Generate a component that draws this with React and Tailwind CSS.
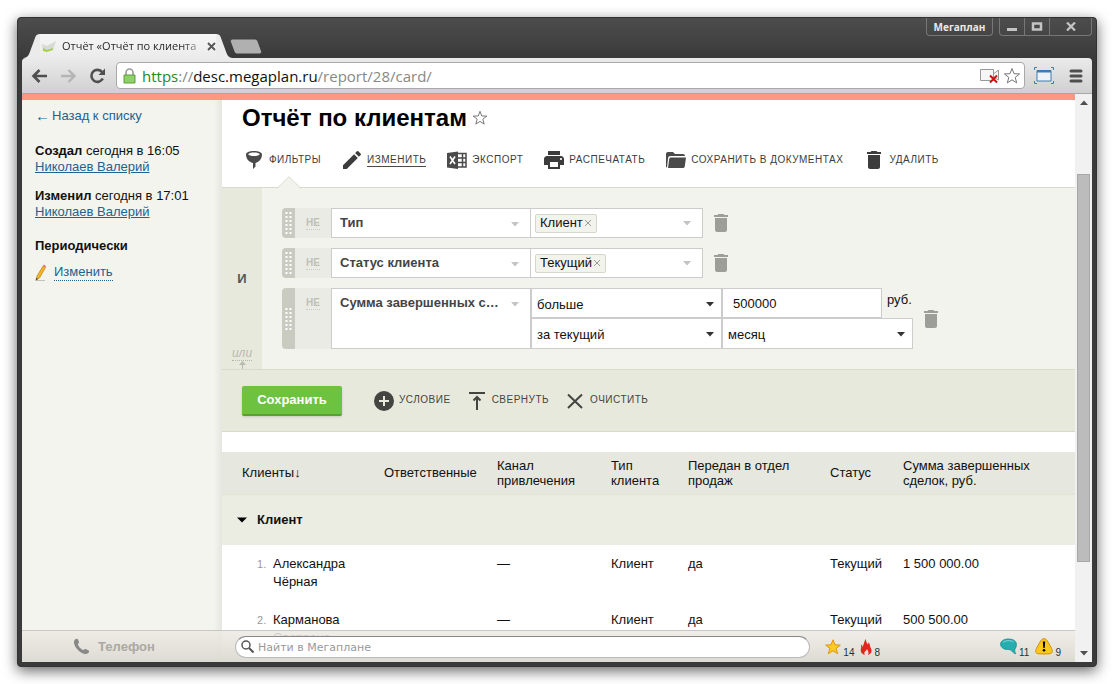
import React, { useState } from 'react';
import { MdEdit, MdPrint, MdDelete } from 'react-icons/md';

const sidebarEvents = [
  { action: 'Создал', when: 'сегодня в 16:05', who: 'Николаев Валерий' },
  { action: 'Изменил', when: 'сегодня в 17:01', who: 'Николаев Валерий' },
];

const columns = [
  { title: 'Клиенты↓', width: 'w-[162px]' },
  { title: 'Ответственные', width: 'w-[113px]' },
  { title: 'Канал привлечения', width: 'w-[114px]' },
  { title: 'Тип клиента', width: 'w-[77px]' },
  { title: 'Передан в отдел продаж', width: 'w-[142px]' },
  { title: 'Статус', width: 'w-[73px]' },
  { title: 'Сумма завершенных сделок, руб.', width: '' },
];

const clients = [
  { name: 'Александра Чёрная', channel: '—', type: 'Клиент', passed: 'да', status: 'Текущий', sum: '1 500 000.00' },
  { name: 'Карманова Светлана', channel: '—', type: 'Клиент', passed: 'да', status: 'Текущий', sum: '500 500.00' },
];

/* ---------- Icons ---------- */

const FilterIcon = () => (
  <svg width="24" height="24" viewBox="0 0 24 24" fill="#4a4a4a">
    <path fillRule="evenodd" d="M4 6.5C4 4.4 7.4 3 12 3s8 1.400 8 3.500c0 4-2.800 7.500-6.500 8.500v3.500L11 21v-6C6.800 14 4 10.500 4 6.500zm2.200-.3C6.800 7.300 9 8 12 8s5.200-.7 5.800-1.800C17.200 5.100 15 4.500 12 4.500s-5.200.6-5.800 1.700z" />
  </svg>
);

const ExcelIcon = () => (
  <svg width="24" height="24" viewBox="0 0 24 24">
    <path fill="#4a4a4a" d="M2 5l11-1.500V21L2 19.500z" />
    <path fill="none" stroke="#4a4a4a" strokeWidth="1.500" d="M13 5.500h8v13.500h-8M13 10h8M13 14.500h8M17.500 5.500v13.500" />
    <path fill="none" stroke="#fff" strokeWidth="1.600" d="M5 8.500l5 7.500M10 8.500L5 16" />
  </svg>
);

const FolderIcon = () => (
  <svg width="24" height="24" viewBox="0 0 24 24" fill="#4a4a4a">
    <path d="M2 19V6c0-1.100.9-2 2-2h5l2 2h8c1.100 0 2 .9 2 2H6.500C5 8 4.300 8.800 4.100 10L3 19.500z" />
    <path d="M7 9.500h15l-1.200 8.700c-.1 1-.9 1.800-2 1.800H4l1.200-9c.1-.9.800-1.500 1.800-1.500z" />
  </svg>
);

const PlusIcon = () => (
  <svg width="24" height="24" viewBox="0 0 24 24">
    <circle cx="12" cy="12" r="10" fill="#444541" />
    <path d="M12 7v10M7 12h10" stroke="#e8e9dd" strokeWidth="2" />
  </svg>
);

const CollapseIcon = () => (
  <svg width="24" height="24" viewBox="0 0 24 24" fill="none" stroke="#444541" strokeWidth="2">
    <path d="M4 4h16M12 8v13M8.500 11.500L12 8l3.500 3.500" />
  </svg>
);

const ClearIcon = () => (
  <svg width="24" height="24" viewBox="0 0 24 24" fill="none" stroke="#444541" strokeWidth="2">
    <path d="M5 5.500l14 13.500M19 5.500L5 19" />
  </svg>
);

const StarOutline = ({ size, stroke }) => (
  <svg width={size} height={size} viewBox="0 0 18 18" fill="#fff" stroke={stroke}>
    <path d="M9 1.500l2 5.200 5.600.2-4.400 3.500 1.500 5.500L9 12.800l-4.700 3.100 1.500-5.500L1.400 6.900 7 6.700z" />
  </svg>
);

const Caret = ({ className }) => (
  <svg className={className} width="8" height="5" viewBox="0 0 8 5" fill="currentColor">
    <path d="M0 0h8L4 4.500z" />
  </svg>
);

/* ---------- Browser frame ---------- */

const TitleBar = () => (
  <div className="flex h-10 items-end justify-between">
    <div className="flex items-end">
      <svg width="18" height="24" viewBox="0 0 18 24" className="shrink-0">
        <path d="M0 24c4 0 6-1 7.500-5L13 4c1-3 2-4 5-4v24z" fill="#ebebeb" />
      </svg>
      <div className="flex h-6 w-[176px] items-center bg-linear-to-b from-[#f6f6f6] to-[#ebebeb]">
        <svg width="18" height="14" viewBox="0 0 18 14" className="shrink-0">
          <path d="M2 5l5 2 9-5-3 9-10 1z" fill="#d8dad4" />
          <path d="M3 9l4 2 6-2v2l-6 2-4-1z" fill="#a5cf4c" />
        </svg>
        <span className="ml-1 w-[142px] bg-linear-to-r from-[#222] from-85% to-[#bbb] bg-clip-text font-['Open_Sans',sans-serif] text-[11px] leading-5 whitespace-nowrap text-transparent">
          Отчёт «Отчёт по клиента
        </span>
        <button type="button" aria-label="Закрыть вкладку" className="ml-[6px]">
          <svg width="9" height="9" viewBox="0 0 9 9" stroke="#555" strokeWidth="1.800">
            <path d="M1 1l7 7M8 1L1 8" />
          </svg>
        </button>
      </div>
      <svg width="18" height="24" viewBox="0 0 18 24" className="shrink-0">
        <path d="M0 0c3 0 4 1 5 4l5.500 15c1.500 4 3.500 5 7.500 5H0z" fill="#ebebeb" />
      </svg>
      <button type="button" aria-label="Новая вкладка" className="mb-1 -ml-1">
        <svg width="32" height="15" viewBox="0 0 32 15">
          <path d="M3 .5h21c2 0 3 .5 3.500 2L31 12c.5 1.500 0 2.500-2 2.500H8c-2 0-3-.5-3.500-2L1 3C.5 1.500 1 .5 3 .5z" fill="#b0b0b0" />
        </svg>
      </button>
    </div>

    <div className="flex gap-[6px] self-start text-[#e8e8e8]">
      <button type="button" className="h-[18px] w-[67px] rounded-b-sm border border-t-0 border-[#777] font-['Open_Sans',sans-serif] text-[10px] leading-4 font-bold">
        Мегаплан
      </button>
      <div className="flex h-[18px] divide-x divide-[#777] rounded-b-sm border border-t-0 border-[#777]">
        <button type="button" aria-label="Свернуть" className="flex w-[25px] items-center justify-center">
          <svg width="12" height="12" viewBox="0 0 12 12"><path d="M1 7h10v3H1z" fill="#c4c4c4" /></svg>
        </button>
        <button type="button" aria-label="Развернуть" className="flex w-[25px] items-center justify-center">
          <svg width="12" height="12" viewBox="0 0 12 12" fill="none" stroke="#c4c4c4" strokeWidth="2.500">
            <path d="M2 2.500h8v6H2z" />
          </svg>
        </button>
        <button type="button" aria-label="Закрыть" className="flex w-[41px] items-center justify-center">
          <svg width="10" height="9" viewBox="0 0 10 9" stroke="#c4c4c4" strokeWidth="2.200">
            <path d="M1 .5l8 8M9 .5l-8 8" />
          </svg>
        </button>
      </div>
    </div>
  </div>
);

const AddressBar = () => (
  <div className="flex h-9 shrink-0 items-center rounded-t-sm border-b border-[#a8a8a8] bg-linear-to-b from-[#ebebeb] to-[#d0d0d0] px-[9px]">
    <button type="button" aria-label="Назад" className="w-[29px]">
      <svg width="17" height="14" viewBox="0 0 17 14" fill="none" stroke="#4f4f4f" strokeWidth="2.600">
        <path d="M16 7H3M8.500 1L2.500 7l6 6" />
      </svg>
    </button>
    <button type="button" aria-label="Вперёд" className="w-[29px]">
      <svg width="17" height="14" viewBox="0 0 17 14" fill="none" stroke="#b4b4b4" strokeWidth="2.400">
        <path d="M1 7h13M8.500 1l6 6-6 6" />
      </svg>
    </button>
    <button type="button" aria-label="Обновить" className="w-[27px]">
      <svg width="17" height="16" viewBox="0 0 17 16" fill="none" stroke="#4f4f4f" strokeWidth="2.600">
        <path d="M13.200 4.200A6 6 0 1 0 13.800 10.500" />
        <path d="M16 .5v6.500H9.500z" fill="#4f4f4f" stroke="none" />
      </svg>
    </button>
    <div className="flex h-[27px] min-w-0 grow items-center rounded-sm border border-[#a9a9a9] bg-white pr-[3px] pl-[6px]">
      <svg width="13" height="16" viewBox="0 0 13 16" className="shrink-0">
        <path d="M3 7V4.500a3.500 3.500 0 0 1 7 0V7" fill="none" stroke="#9a9a9a" strokeWidth="1.600" />
        <path d="M1 7h11v8H1z" fill="#8fd166" stroke="#5f9e3c" />
      </svg>
      <div className="ml-[6px] grow truncate font-['Open_Sans',sans-serif] text-[15px] leading-6 text-[#888]">
        <span className="text-[#1a8a1a]">https</span>://<span className="text-[#111]">desc.megaplan.ru</span>/report/28/card/
      </div>
      <svg width="20" height="17" viewBox="0 0 20 17" className="shrink-0">
        <path d="M.5 2.500h13v11H.5zM13.500 7l5-4v10l-5-3" fill="#f6f6f6" stroke="#999" />
        <path d="M10 8.500l7 7M17 8.500l-7 7" stroke="#d01010" strokeWidth="2" />
      </svg>
      <button type="button" aria-label="Добавить в закладки" className="ml-[3px]">
        <StarOutline size={18} stroke="#777" />
      </button>
    </div>
    <svg width="20" height="17" viewBox="0 0 20 17" className="ml-[9px] shrink-0" fill="none" stroke="#3d7db5">
      <path d="M3 3.500h14v10.500H3z" fill="#eef3f8" />
      <path d="M3 4.500h14" strokeWidth="2" />
      <path d="M.5 3V.5H3M17 .5h2.500V3M19.500 14v2.500H17M3 16.500H.5V14" />
    </svg>
    <button type="button" aria-label="Меню" className="ml-[15px]">
      <svg width="14" height="14" viewBox="0 0 14 14" stroke="#4f4f4f" strokeWidth="3" strokeLinecap="round">
        <path d="M2 2h10M2 7h10M2 12h10" />
      </svg>
    </button>
  </div>
);

const ScrollBar = () => (
  <div className="flex w-[17px] shrink-0 flex-col items-center bg-[#f1f1f1] text-[#505050]">
    <div className="flex h-[17px] items-center"><Caret className="rotate-180" /></div>
    <div className="flex-[63]" />
    <div className="w-[13px] flex-[388] border border-[#a8a8a8] bg-[#bcbcbc]" />
    <div className="flex-[83]" />
    <div className="flex h-[17px] items-center"><Caret /></div>
  </div>
);

/* ---------- Page ---------- */

const Sidebar = () => (
  <aside className="w-[200px] shrink-0 bg-[#f3f3ee] bg-linear-to-r from-[#f4f4ef] from-96% to-[#e6e6e0] pt-2 pl-[13px] leading-4">
    <a href="#reports" className="flex text-[#22628f]">
      <span className="w-[17px] text-[15px]">←</span>
      Назад к списку
    </a>
    <div className="mt-[19px] space-y-[13px]">
      {sidebarEvents.map((event) => (
        <div key={event.action}>
          <div><b>{event.action}</b> {event.when}</div>
          <a href="#user" className="block text-[#22628f] underline">{event.who}</a>
        </div>
      ))}
    </div>
    <h2 className="mt-[18px] font-bold">Периодически</h2>
    <div className="mt-[10px] flex items-center gap-[7px]">
      <svg width="12" height="17" viewBox="0 0 12 17">
        <path d="M1 16l1-4L8 2l2.500 1.500L4.500 14z" fill="#f5b324" stroke="#b9821b" strokeWidth=".7" />
        <path d="M8 2l.8-1.500L11 2l-.6 1.500z" fill="#e8747c" />
        <path d="M1 16l.5-2L3 15z" fill="#222" />
        <path d="M0 16.500h10" stroke="#aaa" strokeWidth=".7" />
      </svg>
      <a href="#schedule" className="border-b border-dotted border-[#22628f] text-[#22628f]">Изменить</a>
    </div>
  </aside>
);

const Action = ({ icon, label, underlined, children }) => (
  <button type="button" className="relative flex items-center gap-[3px]">
    {icon}
    <span className={`text-[10px] leading-3 tracking-wider whitespace-nowrap uppercase ${underlined ? 'border-b border-[#4a4a4a]' : 'border-b border-transparent'}`}>
      {label}
    </span>
    {children}
  </button>
);

const ReportHeader = () => (
  <header className="px-5 pt-[2px] pb-[15px]">
    <div className="flex items-center gap-[5px]">
      <h1 className="text-2xl font-bold text-black">Отчёт по клиентам</h1>
      <button type="button" aria-label="В избранное"><StarOutline size={16} stroke="#666" /></button>
    </div>
    <div className="mt-[14px] flex gap-[19px] text-[#3c3c3c]">
      <Action icon={<FilterIcon />} label="Фильтры">
        {/* notch that links the button with the filter panel */}
        <svg width="24" height="13" viewBox="0 0 24 13" className="absolute top-[28px] left-[35px]">
          <path d="M0 12.500L12 .7l12 11.800" fill="#f2f3ed" stroke="#d8dbcb" />
          <path d="M1 12.500h22" stroke="#f2f3ed" />
        </svg>
      </Action>
      <Action icon={<MdEdit size={24} />} label="Изменить" underlined />
      <Action icon={<ExcelIcon />} label="Экспорт" />
      <Action icon={<MdPrint size={24} />} label="Распечатать" />
      <Action icon={<FolderIcon />} label="Сохранить в документах" />
      <Action icon={<MdDelete size={24} />} label="Удалить" />
    </div>
  </header>
);

const FilterSelect = ({ label, value, className, selectClass, caretClass }) => (
  <div className={`relative border border-[#ccc] bg-white ${className}`}>
    <select aria-label={label} defaultValue={value} className={`h-7 w-full appearance-none truncate ${selectClass}`}>
      <option>{value}</option>
    </select>
    <Caret className={`pointer-events-none absolute top-[13px] ${caretClass}`} />
  </div>
);

const FilterRow = ({ field, children }) => (
  <div className="flex">
    <div className="flex w-[13px] items-center justify-center rounded-l-sm bg-[#c9cac0]">
      <svg width="7" height="22" viewBox="0 0 7 22" stroke="#fff" strokeWidth="2" strokeDasharray="2 2">
        <path d="M1.500 0v22M5.500 0v22" />
      </svg>
    </div>
    <div className="w-9 bg-[#ebebe5] pt-[9px] text-center">
      <button type="button" className="mx-auto block border-b border-dotted border-[#c9cac0] text-[10px] leading-3 font-bold text-[#bfc0b4]">
        НЕ
      </button>
    </div>
    <FilterSelect label="Поле" value={field} className="w-[200px]" selectClass="pr-[30px] pl-2 font-bold text-[#444]" caretClass="right-[11px] text-[#c4c4c4]" />
    {children}
  </div>
);

const TokenField = ({ value }) => (
  <div className="-ml-px flex h-[30px] w-[173px] items-center justify-between border border-[#ccc] bg-white pr-[11px] pl-1">
    <span className="flex h-[19px] items-center gap-px rounded-xs border border-[#d5d8c6] bg-[#f2f3ed] px-1 leading-4">
      {value}
      <button type="button" aria-label="Убрать">
        <svg width="8" height="8" viewBox="0 0 8 8" stroke="#999"><path d="M1 1l6 6M7 1L1 7" /></svg>
      </button>
    </span>
    <button type="button" aria-label="Выбрать значение"><Caret className="text-[#c4c4c4]" /></button>
  </div>
);

const DeleteCondition = () => (
  <button type="button" aria-label="Удалить условие" className="ml-[6px] self-center text-[#9d9e98]">
    <MdDelete size={24} />
  </button>
);

const Filters = () => {
  const [amount, setAmount] = useState('500000');

  return (
    <section className="flex border-y border-[#d8dbcb] bg-[#f2f3ed]">
      <div className="flex w-10 shrink-0 flex-col items-center bg-[#e8e9dd]">
        <div className="flex-1" />
        <span className="font-bold text-[#555]">И</span>
        <div className="flex flex-1 flex-col items-center justify-end">
          <button type="button" className="border-b border-dotted border-[#b5b6aa] text-[12px] leading-[14px] text-[#b9baae] italic">или</button>
          <svg width="7" height="8" viewBox="0 0 7 8" fill="#b9baae"><path d="M3.500 0L7 4H4v4H3V4H0z" /></svg>
        </div>
      </div>

      <div className="space-y-[10px] py-5 pl-5">
        <FilterRow field="Тип">
          <TokenField value="Клиент" />
          <DeleteCondition />
        </FilterRow>
        <FilterRow field="Статус клиента">
          <TokenField value="Текущий" />
          <DeleteCondition />
        </FilterRow>
        <FilterRow field="Сумма завершенных сделок">
          <div>
            <div className="flex">
              <FilterSelect label="Сравнение" value="больше" className="w-[191px]" selectClass="pt-[3px] pl-[5px]" caretClass="right-[7px] text-[#333]" />
              <input
                aria-label="Сумма"
                value={amount}
                onChange={(e) => setAmount(e.target.value)}
                className="h-[30px] w-[160px] border border-[#ccc] bg-white px-[10px]"
              />
              <span className="pt-[2px] pl-[5px]">руб.</span>
            </div>
            <div className="flex h-[31px]">
              <FilterSelect label="Период" value="за текущий" className="w-[191px]" selectClass="pt-[3px] pl-[5px]" caretClass="right-[7px] text-[#333]" />
              <FilterSelect label="Единица периода" value="месяц" className="w-[191px]" selectClass="pt-[3px] pl-[5px]" caretClass="right-[7px] text-[#333]" />
            </div>
          </div>
          <DeleteCondition />
        </FilterRow>
      </div>
    </section>
  );
};

const FilterActions = () => (
  <div className="flex h-[62px] items-center border-b border-[#d8dbc4] bg-[#e8e9dd] px-5 text-[#444541]">
    <button type="button" className="mr-[30px] h-[30px] w-[100px] rounded-xs border-b-2 border-[#5a9f33] bg-[#6dc23f] font-bold text-white shadow-sm">
      Сохранить
    </button>
    <div className="flex gap-[14px]">
      <Action icon={<PlusIcon />} label="Условие" />
      <Action icon={<CollapseIcon />} label="Свернуть" />
      <Action icon={<ClearIcon />} label="Очистить" />
    </div>
  </div>
);

const ClientsTable = () => (
  <table className="mt-5 w-full table-fixed text-left">
    <thead>
      <tr className="h-[42px] border-b border-[#e2e2d6] bg-[#e6e7de] leading-[15px]">
        {columns.map((column, i) => (
          <th key={column.title} scope="col" className={`font-normal ${column.width} ${i === 0 ? 'pl-5' : ''} ${i === 6 ? 'pr-10' : 'pr-2'}`}>
            {i === 1 ? <span className="whitespace-nowrap">{column.title}</span> : column.title}
          </th>
        ))}
      </tr>
    </thead>
    <tbody className="leading-[18px]">
      <tr className="h-[51px] bg-[#ebece2]">
        <th scope="rowgroup" colSpan={7} className="pl-[15px]">
          <button type="button" className="flex items-center gap-[10px] font-bold">
            <svg width="10" height="6" viewBox="0 0 10 6"><path d="M0 .5h10L5 5.500z" /></svg>
            Клиент
          </button>
        </th>
      </tr>
      {clients.map((client, i) => (
        <tr key={client.name} className="align-top">
          <td className="py-[10px] pr-8 pl-[35px]">
            <div className="flex">
              <span className="w-4 shrink-0 text-[11px] text-[#999]">{i + 1}.</span>
              {client.name}
            </div>
          </td>
          <td />
          <td className="py-[10px]">{client.channel}</td>
          <td className="py-[10px]">{client.type}</td>
          <td className="py-[10px]">{client.passed}</td>
          <td className="py-[10px]">{client.status}</td>
          <td className="py-[10px]">{client.sum}</td>
        </tr>
      ))}
    </tbody>
  </table>
);

const Counter = ({ icon, count }) => (
  <a href="#notifications" className="flex items-end gap-[2px] text-[10px] leading-[10px] text-[#234]">
    {icon}
    <span className="-mb-[3px]">{count}</span>
  </a>
);

const BottomBar = () => (
  <footer className="absolute inset-x-0 bottom-0 flex h-8 items-center border-t border-[#c9c8c2] bg-linear-to-b from-[#edeae4]/85 to-[#dddcd3]">
    <button type="button" className="flex w-[200px] shrink-0 items-center justify-center gap-2 pr-4 font-bold text-[#aaa9a3]">
      <svg width="17" height="17" viewBox="0 0 17 17" fill="#888">
        <path d="M2 1.500C3 .5 4.500.5 5 1.500l1 2.500c.3.800-.8 1.700-1.200 2.300.8 2.500 2.800 4.700 5.500 5.900.8-.7 1.500-1.600 2.300-1.200l3 1.500c1 .7.500 2-.6 2.800-1.500 1.200-4 .9-6.500-.5C4.500 12.500 1.500 8.500 1 5 .9 3.500 1 2.500 2 1.500z" />
      </svg>
      Телефон
    </button>
    <label className="ml-[13px] flex h-[22px] min-w-0 grow items-center gap-1 rounded-full border border-[#bbb] border-t-[#888] bg-white pl-[5px]">
      <svg width="13" height="13" viewBox="0 0 13 13" fill="none" stroke="#555">
        <circle cx="5" cy="5" r="4" strokeWidth="1.500" />
        <path d="M8 8l4.500 4.500" strokeWidth="2" />
      </svg>
      <input aria-label="Поиск" placeholder="Найти в Мегаплане" className="h-5 min-w-0 grow pt-[2px] font-['DejaVu_Sans',sans-serif] text-[11px] outline-none placeholder:text-[#999]" />
    </label>
    <div className="ml-[15px] flex gap-[6px]">
      <Counter
        count="14"
        icon={
          <svg width="16" height="16" viewBox="0 0 16 16">
            <path d="M8 .8l2 5 5.300.3-4.100 3.400 1.400 5.200L8 11.800l-4.600 2.900 1.400-5.200L.7 6.100 6 5.800z" fill="#ffcb1f" stroke="#dd9512" />
          </svg>
        }
      />
      <Counter
        count="8"
        icon={
          <svg width="12" height="16" viewBox="0 0 12 16">
            <path d="M5 16C1.500 15 0 12.500 1 9.500 1.500 8 .8 7 1 5.500c1 .5 1.500 1.500 1.500 2.500C4 6 3.500 3 6 0c0 2.500.5 4 2 5.500C8.500 4.500 8.500 3.500 8.500 3c2 2.500 1 4 2.500 6.500 1.500 3 0 5.500-3 6.500 1-2 .5-4-1-6-.3 1-.8 1.500-1.500 2C4 13 4 14.500 5 16z" fill="#e3261c" />
          </svg>
        }
      />
    </div>
    <div className="mr-[14px] ml-[120px] flex gap-[6px]">
      <Counter
        count="11"
        icon={
          <svg width="17" height="17" viewBox="0 0 17 17">
            <path d="M8.500 1C4 1 .6 3 .6 6.200s3 5.200 7 5.300c2 0 3 .2 4 1.300 1 1.200 2.300 2.700 4.200 3-1-1.500-1.200-3-.9-4.800 1-1.200 1.600-2.800 1.500-4.800C16.300 3 13 1 8.500 1z" fill="#25adb0" stroke="#168f92" strokeWidth=".8" />
            <path d="M3 4.500C5 2.200 11 2 13.500 4" fill="none" stroke="#8ed8da" />
          </svg>
        }
      />
      <Counter
        count="9"
        icon={
          <svg width="18" height="17" viewBox="0 0 18 17">
            <path d="M9 .7c1.500 0 2.800 1 4 3.300 1 1.800 2.500 4.200 3.600 6.500 1.500 3.300.6 5-2.600 5.300-3 .3-7 .3-10 0C.8 15.500-.1 13.800 1.400 10.500 2.500 8.200 4 5.800 5 4 6.200 1.700 7.500.7 9 .7z" fill="#fbc81c" stroke="#cf8f10" />
            <path d="M7.800 3.500h2.400L9.700 10H8.300z" />
            <circle cx="9" cy="12.200" r="1.300" />
          </svg>
        }
      />
    </div>
  </footer>
);

export default function App() {
  return (
    <div className="h-screen overflow-hidden bg-white p-[17px] font-['Liberation_Sans',Arial,sans-serif] text-[13px] text-[#111]">
      <div className="flex h-full flex-col rounded-sm border border-[#333] bg-[#3f3f3f] bg-linear-to-b from-[#4d4d4d] to-[#3a3a3a] to-[40px] px-1 pb-1 shadow-[0_4px_14px_rgba(0,0,0,0.6)]">
        <TitleBar />
        <AddressBar />
        <div className="flex min-h-0 grow bg-white">
          <div className="relative flex min-w-0 grow flex-col overflow-hidden border-t-[6px] border-[#fd9682]">
            <div className="flex min-h-0 grow">
              <Sidebar />
              <main className="min-w-0 grow">
                <ReportHeader />
                <Filters />
                <FilterActions />
                <ClientsTable />
              </main>
            </div>
            <BottomBar />
          </div>
          <ScrollBar />
        </div>
      </div>
    </div>
  );
}
